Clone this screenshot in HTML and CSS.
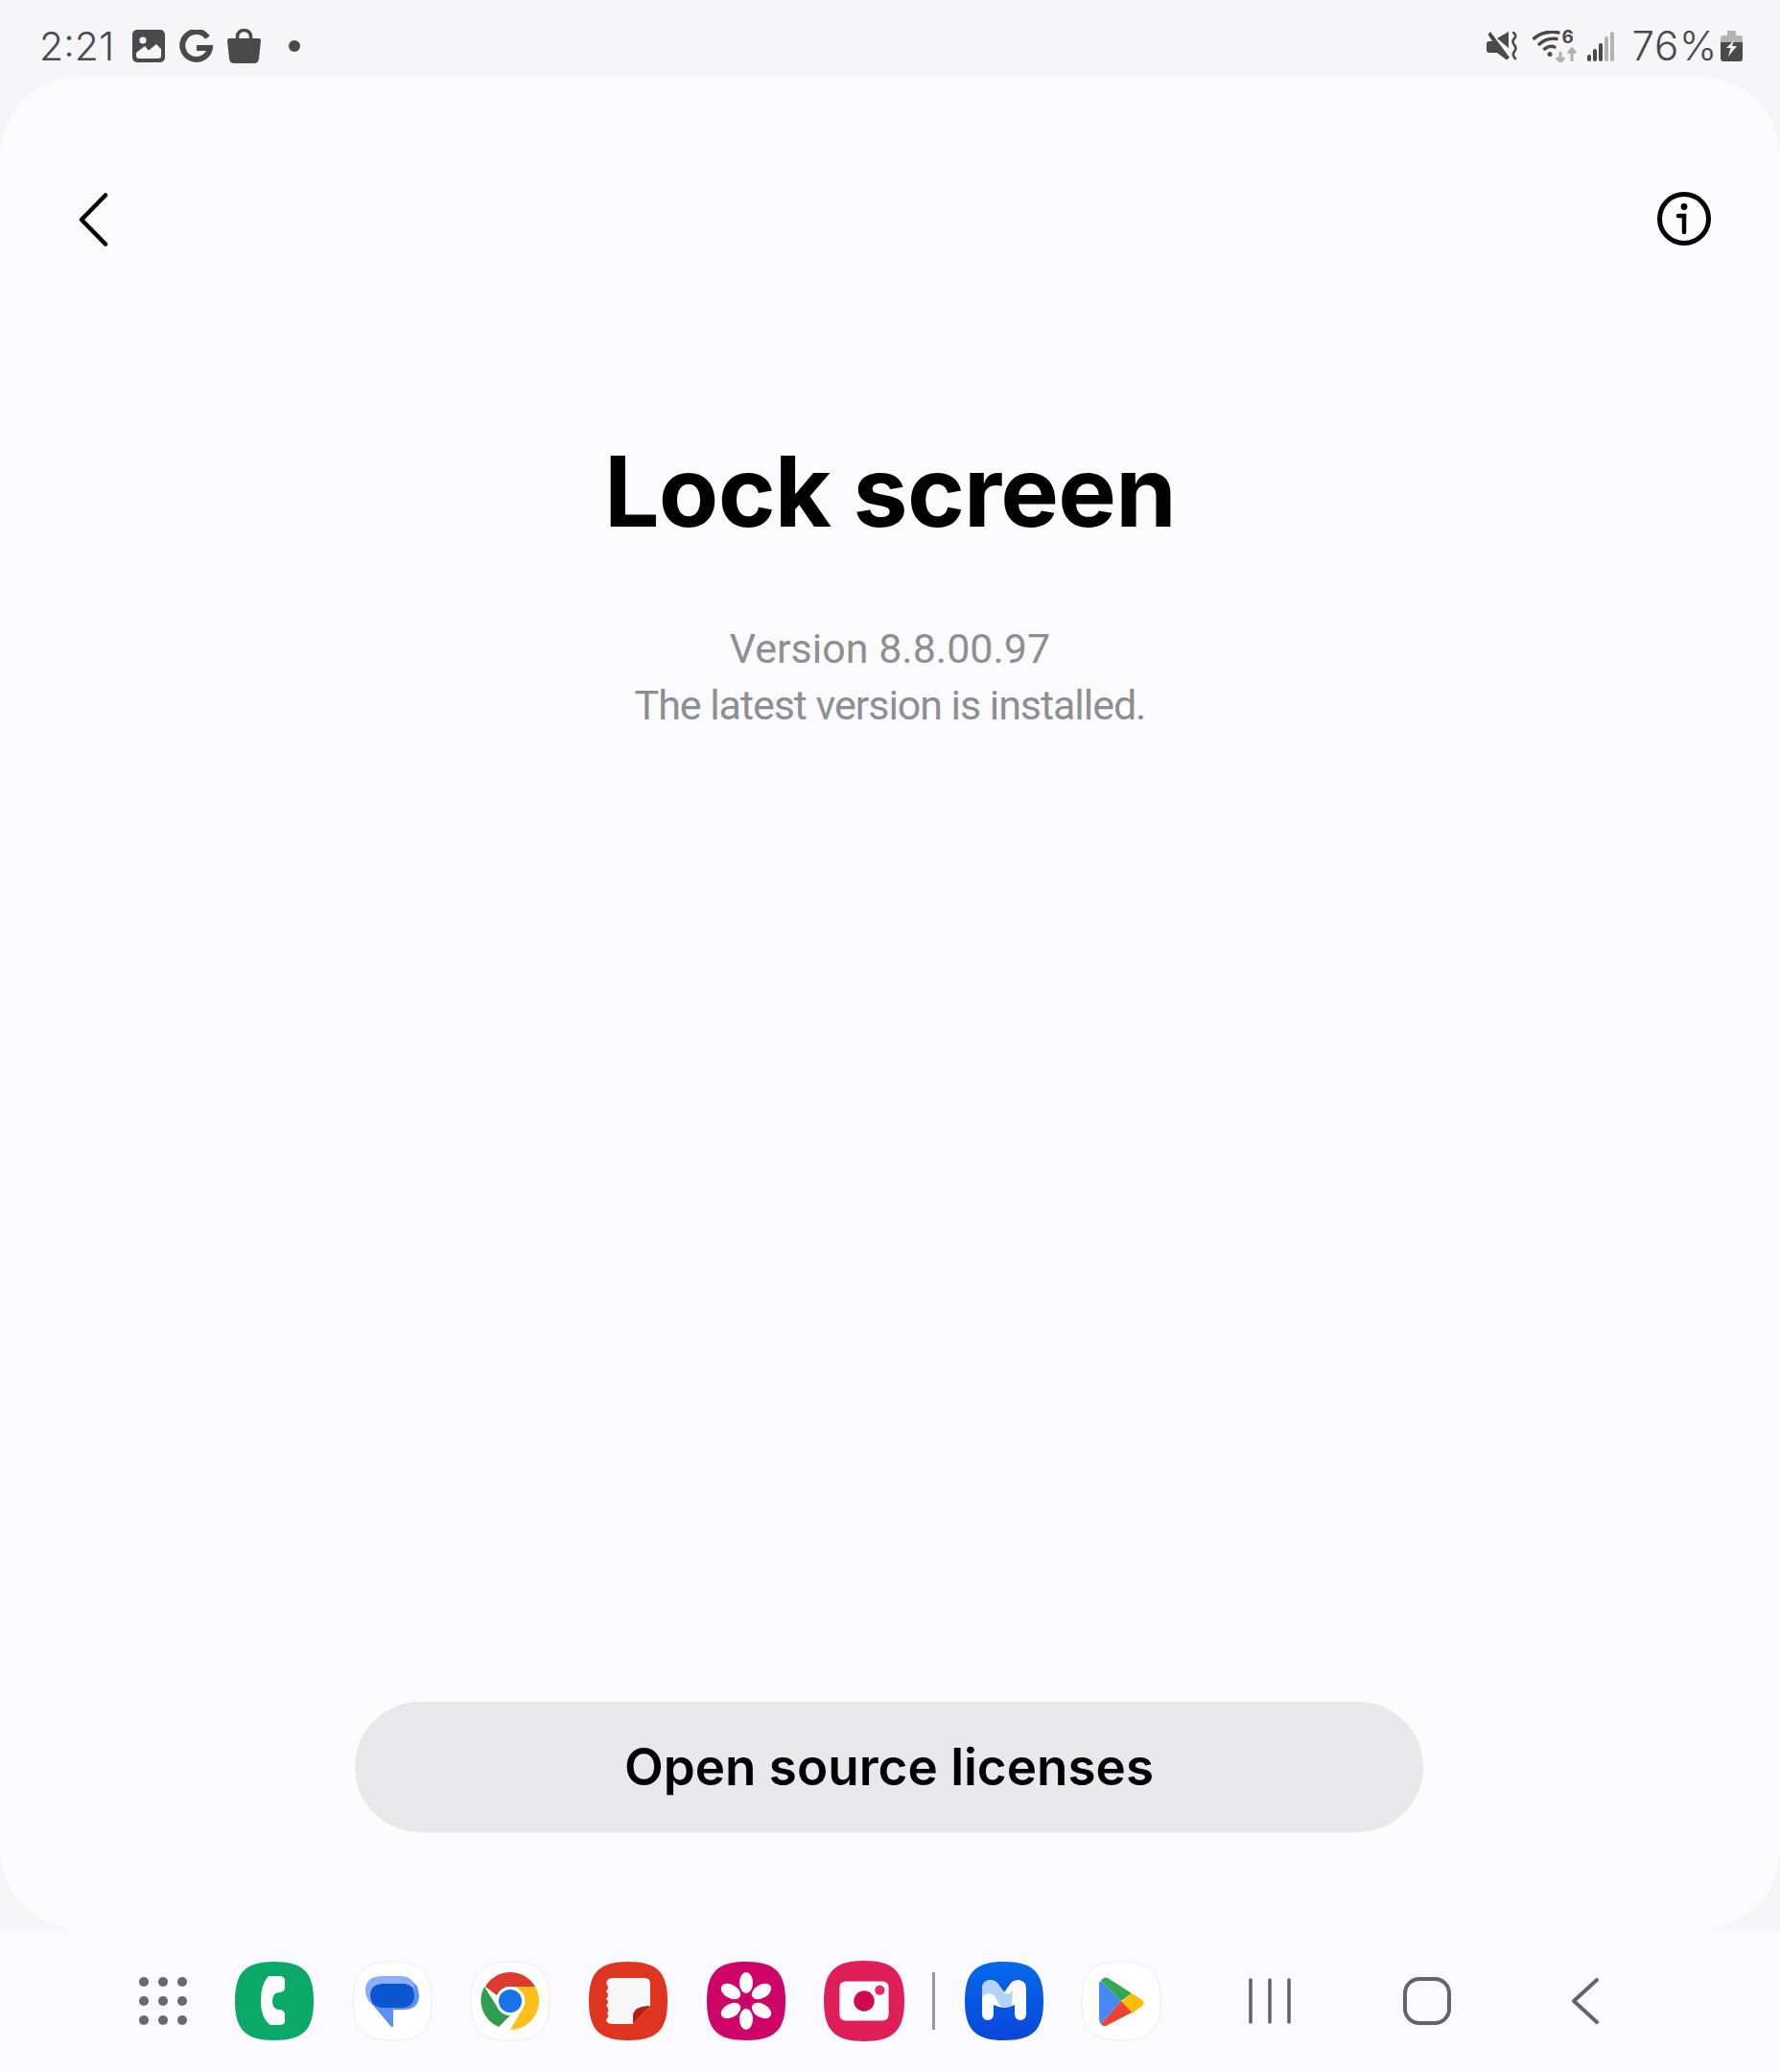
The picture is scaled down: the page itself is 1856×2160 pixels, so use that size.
FILE: index.html
```html
<!DOCTYPE html>
<html lang="en">
<head>
  <meta charset="UTF-8">
  <meta name="viewport" content="width=device-width, initial-scale=1.0">
  <title>Lock screen</title>
  <link rel="stylesheet" href="styles.css">
</head>
<body>
  <header class="status-bar">
    <div class="status-left">
      <span class="status-time">2:21</span>
      <svg class="st-gallery" width="34" height="34" viewBox="0 0 34 34">
        <rect width="34" height="34" rx="5" fill="#4a4a4a"/>
        <path d="M4 27 V24 L13 17 L17 21.500 L25 15 L30 20 V27 Q30 30 27 30 H7 Q4 30 4 27 Z" fill="#f6f6f8"/>
        <circle cx="11" cy="11" r="3.600" fill="#f6f6f8"/>
      </svg>
      <svg class="st-g" width="35" height="35" viewBox="0 0 35 35">
        <path d="M29.500 8 A14.500 14.500 0 1 0 32 19 H18" fill="none" stroke="#4a4a4a" stroke-width="6"/>
      </svg>
      <svg class="st-bag" width="35" height="36" viewBox="0 0 35 36">
        <path d="M0 12 Q0 10 2 10 H33 Q35 10 35 12 L33 31 Q32.500 36 28 36 H7 Q2.500 36 2 31 Z" fill="#4a4a4a"/>
        <path d="M10.500 12 V8 A7 6.500 0 0 1 24.500 8 V12" fill="none" stroke="#4a4a4a" stroke-width="3.500"/>
      </svg>
      <span class="status-dot"></span>
    </div>
    <div class="status-right">
      <svg class="st-mute" width="32" height="30" viewBox="0 0 32 30">
        <path d="M4 0 L24 27 L21 29.500 L15 25 L11 22 H3 Q0 22 0 19 V13 Q0 10 3 10 H6 L1.500 3 Z" fill="#4a4a4a"/>
        <path d="M11 7 L23 0 V17 Z" fill="#4a4a4a"/>
        <path d="M28 1 Q32 4 29 7 Q26 10 29 14 Q32 17 29 21 Q26 24 30 28" fill="none" stroke="#4a4a4a" stroke-width="2.500" stroke-linecap="round"/>
      </svg>
      <div class="st-wifi">
        <svg width="46" height="33" viewBox="0 0 46 33">
          <path d="M1.500 8 Q13 -1 27 2" fill="none" stroke="#4a4a4a" stroke-width="3.500" stroke-linecap="round"/>
          <path d="M7 14 Q15 7 25 8.500" fill="none" stroke="#4a4a4a" stroke-width="3.500" stroke-linecap="round"/>
          <path d="M12.500 19 Q18 15 23 17" fill="none" stroke="#4a4a4a" stroke-width="3.500" stroke-linecap="round"/>
          <circle cx="18" cy="24.500" r="2.500" fill="#4a4a4a"/>
          <path d="M29 22 V32 M25 28 L29 32.500 L33 28" fill="none" stroke="#b0b0b0" stroke-width="3"/>
          <path d="M41 32 V19 M37 23.500 L41 19 L45 23.500" fill="none" stroke="#b0b0b0" stroke-width="3"/>
        </svg>
        <span class="wifi-six">6</span>
      </div>
      <svg class="st-signal" width="28" height="31" viewBox="0 0 28 31">
        <rect x="0" y="24" width="4" height="7" rx="2" fill="#4a4a4a"/>
        <rect x="6" y="18" width="4" height="13" rx="2" fill="#4a4a4a"/>
        <rect x="12" y="12" width="4" height="19" rx="2" fill="#4a4a4a"/>
        <rect x="18" y="5" width="4" height="26" rx="2" fill="#b4b4b4"/>
        <rect x="24" y="0" width="4" height="31" rx="2" fill="#b4b4b4"/>
      </svg>
      <span class="status-batt">76%</span>
      <svg class="st-batt" width="23" height="32" viewBox="0 0 23 32">
        <path d="M7 0 H16 V5 H20 Q23 5 23 8 V12 H0 V8 Q0 5 3 5 H7 Z" fill="#b4b4b4"/>
        <path d="M0 12 H23 V29 Q23 32 20 32 H3 Q0 32 0 29 Z" fill="#4a4a4a"/>
        <path d="M14 10 L6 18 H10.500 L8 27 L17 16 H12 Z" fill="#f6f6f8"/>
      </svg>
    </div>
  </header>

  <main class="card">
    <div class="top-row">
      <svg width="36" height="60" viewBox="0 0 36 60">
        <path d="M30 5.500 L5 31 L30 56.500" fill="none" stroke="#000" stroke-width="4.500" stroke-linecap="round" stroke-linejoin="round"/>
      </svg>
      <svg width="60" height="60" viewBox="0 0 60 60">
        <circle cx="30" cy="30" r="25.500" fill="none" stroke="#000" stroke-width="5"/>
        <circle cx="30" cy="17.500" r="3.400" fill="#000"/>
        <path d="M24 27 H30 V44" fill="none" stroke="#000" stroke-width="4.500" stroke-linecap="round"/>
      </svg>
    </div>
    <div class="about">
      <h1 class="app-name">Lock screen</h1>
      <p class="version">Version 8.8.00.97</p>
      <p class="version version-note">The latest version is installed.</p>
    </div>
    <button type="button" class="license-btn">Open source licenses</button>
  </main>

  <footer class="taskbar">
    <div class="dock">
      <div class="app-grid">
        <i></i><i></i><i></i><i></i><i></i><i></i><i></i><i></i><i></i>
      </div>
      <svg class="app" viewBox="0 0 84 84">
        <path d="M42 1 C72 1 83 12 83 42 C83 72 72 83 42 83 C12 83 1 72 1 42 C1 12 12 1 42 1 Z" fill="#0aa968"/>
        <path d="M36 16 H47 Q53 16 53 21 V28 Q53 32 48 33 Q40 33 40 42 Q40 51 48 51 Q53 52 53 56 V63 Q53 67 47 67 H38 Q28 60 28 42 Q28 24 36 16 Z" fill="#fff"/>
      </svg>
      <svg class="app" viewBox="0 0 84 84">
        <path d="M42 1 C72 1 83 12 83 42 C83 72 72 83 42 83 C12 83 1 72 1 42 C1 12 12 1 42 1 Z" fill="#fff" stroke="#ececf0"/>
        <path d="M20 44 L41 69 Q43 70 43 67 V51 H55 Q70 50 70 36 Q70 24 58 18 H30 Z" fill="#5b8ffb"/>
        <path d="M30 16 H52 Q62 16 65 26 V40 L22 47 Q14 40 14 31 Q14 17 30 16 Z" fill="#8badfb"/>
        <path d="M31 24 H55 Q65 25 65 36 Q65 48 53 49 H30 Q19 47 19 36 Q19 25 31 24 Z" fill="#0b57d0"/>
      </svg>
      <svg class="app" viewBox="0 0 84 84">
        <path d="M42 1 C72 1 83 12 83 42 C83 72 72 83 42 83 C12 83 1 72 1 42 C1 12 12 1 42 1 Z" fill="#fff" stroke="#ececf0"/>
        <path d="M42 12 A30 30 0 0 1 68 27 H42 A15 15 0 0 0 28 36 L16 27 A30 30 0 0 1 42 12 Z" fill="#db3a2c"/>
        <path d="M15 27 L29 49 A15 15 0 0 0 42 57 L30 69 A30 30 0 0 1 15 27 Z" fill="#2f9e50"/>
        <path d="M68 27 A30 30 0 0 1 42 72 L55 50 A15 15 0 0 0 55 34 L48 27 Z" fill="#fdc01a"/>
        <circle cx="42" cy="42" r="15" fill="#fff"/>
        <circle cx="42" cy="42" r="12" fill="#1b73e8"/>
      </svg>
      <svg class="app" viewBox="0 0 84 84">
        <path d="M42 1 C72 1 83 12 83 42 C83 72 72 83 42 83 C12 83 1 72 1 42 C1 12 12 1 42 1 Z" fill="#df3420"/>
        <path d="M25 18 H59 Q65 18 65 24 V47 L47 66 H26 Q19 66 19 61 Q23 58 20 55 Q23 50 19 47 Q23 42 19 40 Q23 35 19 32 Q23 27 19 24 Q20 18 25 18 Z" fill="#f9f8f8"/>
        <path d="M47 66 V57 Q48 47 65 47 Z" fill="#b01f1c"/>
      </svg>
      <svg class="app" viewBox="0 0 84 84">
        <path d="M42 1 C72 1 83 12 83 42 C83 72 72 83 42 83 C12 83 1 72 1 42 C1 12 12 1 42 1 Z" fill="#cf0468"/>
        <g fill="#fff">
          <ellipse cx="42" cy="23" rx="7" ry="11"/>
          <ellipse cx="42" cy="61" rx="7" ry="11"/>
          <ellipse cx="26" cy="32" rx="7" ry="11" transform="rotate(-60 26 32)"/>
          <ellipse cx="58" cy="32" rx="7" ry="11" transform="rotate(60 58 32)"/>
          <ellipse cx="26" cy="52" rx="7" ry="11" transform="rotate(60 26 52)"/>
          <ellipse cx="58" cy="52" rx="7" ry="11" transform="rotate(-60 58 52)"/>
        </g>
        <circle cx="42" cy="42" r="5.500" fill="#c40560"/>
      </svg>
      <svg class="app app-camera" viewBox="0 0 84 84">
        <path d="M42 1 C72 1 83 12 83 42 C83 72 72 83 42 83 C12 83 1 72 1 42 C1 12 12 1 42 1 Z" fill="#e01f58"/>
        <rect x="17" y="22" width="50" height="40" rx="6" fill="#fff"/>
        <circle cx="42" cy="42" r="10.500" fill="#d0094f"/>
        <circle cx="58" cy="31" r="5" fill="#e82a5e"/>
      </svg>
      <span class="dock-sep"></span>
      <svg class="app app-m" viewBox="0 0 84 84">
        <defs>
          <linearGradient id="mblue" x1="0" y1="0" x2="0" y2="1">
            <stop offset="0" stop-color="#0469ec"/>
            <stop offset="1" stop-color="#0b46dc"/>
          </linearGradient>
        </defs>
        <path d="M42 1 C72 1 83 12 83 42 C83 72 72 83 42 83 C12 83 1 72 1 42 C1 12 12 1 42 1 Z" fill="url(#mblue)"/>
        <path d="M19 29 V55 Q19 62 25 62 Q31 62 31 55 V46 Q37 49 42 49 Q47 49 53 46 V55 Q53 62 59 62 Q65 62 65 55 V29 Q65 21 57 20 Q50 20 47 26 L42 33 L37 26 Q34 20 27 20 Q19 21 19 29 Z" fill="#fff"/>
        <path d="M19 29 Q19 21 27 20 Q34 20 37 26 L43 34 Q47 36 51 31 L50 47 Q46 49 42 49 Q37 48 33 38 Q27 31 19 37 Z" fill="#b5d3f8"/>
      </svg>
      <svg class="app" viewBox="0 0 84 84">
        <path d="M42 1 C72 1 83 12 83 42 C83 72 72 83 42 83 C12 83 1 72 1 42 C1 12 12 1 42 1 Z" fill="#fff" stroke="#ececf0"/>
        <path d="M21 21 L42 42 L21 66 Q19 64 19 60 V24 Q19 22 21 21 Z" fill="#4688f5"/>
        <path d="M21 21 Q24 16 28 18 L53 34 L42 42 Z" fill="#33a852"/>
        <path d="M53 34 L64 41 Q67 45 64 47 L53 55 L42 43 Z" fill="#fdbd05"/>
        <path d="M21 66 Q24 70 28 67 L53 54 L42 42 Z" fill="#ea4336"/>
      </svg>
    </div>
    <div class="nav-keys">
      <svg width="46" height="48" viewBox="0 0 46 48">
        <path d="M3 2 V46 M23 2 V46 M43 2 V46" fill="none" stroke="#646464" stroke-width="3.500" stroke-linecap="round"/>
      </svg>
      <svg width="50" height="50" viewBox="0 0 50 50">
        <rect x="2" y="2" width="46" height="46" rx="15" fill="none" stroke="#646464" stroke-width="4"/>
      </svg>
      <svg class="nav-back" width="30" height="50" viewBox="0 0 30 50">
        <path d="M27 3 L3 25 L27 47" fill="none" stroke="#646464" stroke-width="4" stroke-linecap="round" stroke-linejoin="round"/>
      </svg>
    </div>
  </footer>
</body>
</html>
```

FILE: styles.css
```css
html, body {
  margin: 0;
  padding: 0;
  background-color: #f6f6f8;
}

body {
  width: 1856px;
  height: 2160px;
  display: flex;
  flex-direction: column;
  font-family: Inter, "Liberation Sans", sans-serif;
  color: #000;
  overflow: hidden;
}

.status-bar {
  box-sizing: border-box;
  height: 80px;
  display: flex;
  justify-content: space-between;
  align-items: center;
  padding: 16px 39px 0 41px;
  color: #4a4a4a;
}

.status-left,
.status-right {
  display: flex;
  align-items: center;
}

.status-time,
.status-batt {
  font-size: 41px;
  font-weight: 300;
  line-height: 48px;
}

.status-batt {
  margin: 0 3px 0 18px;
  font-size: 42px;
  letter-spacing: 0.7px;
}

.st-gallery {
  margin-left: 19px;
}

.st-g,
.st-bag {
  margin-left: 15px;
}

.status-dot {
  width: 12px;
  height: 12px;
  margin-left: 29px;
  border-radius: 50%;
  background-color: #4a4a4a;
}

.st-wifi {
  position: relative;
  display: flex;
  margin: 0 11px 0 16px;
}

.wifi-six {
  position: absolute;
  top: -3px;
  left: 30px;
  font-size: 19px;
  font-weight: 700;
  line-height: 20px;
  color: #4a4a4a;
}

.card {
  flex: 0 0 1931px;
  display: flex;
  flex-direction: column;
  align-items: center;
  border-radius: 84px;
  background-color: #fcfcfe;
}

.top-row {
  align-self: stretch;
  display: flex;
  justify-content: space-between;
  align-items: center;
  height: 60px;
  margin-top: 118px;
  padding: 0 70px 0 80px;
}

.about {
  flex: 1;
  text-align: center;
}

.app-name {
  margin: 0 0 75px;
  padding-top: 194px;
  font-size: 102px;
  font-weight: 700;
  line-height: 120px;
  letter-spacing: -0.8px;
}

.version {
  margin: 0;
  font-family: Roboto, Inter, sans-serif;
  font-size: 43px;
  font-weight: 400;
  line-height: 59px;
  color: #8e8e93;
}

.version-note {
  letter-spacing: -1.05px;
}

.license-btn {
  width: 1114px;
  height: 136px;
  margin: 0 2px 101px 0;
  border: none;
  border-radius: 68px;
  background-color: #e9e9eb;
  color: #000;
  font-family: Inter, "Liberation Sans", sans-serif;
  font-size: 53px;
  font-weight: 600;
}

.taskbar {
  flex: 1;
  display: flex;
  align-items: center;
  padding-left: 145px;
  background-color: #fbfbff;
}

.dock {
  display: flex;
  align-items: center;
}

.app-grid {
  display: grid;
  grid-template-columns: repeat(3, 10px);
  gap: 10px;
  margin-right: 49px;
}

.app-grid i {
  width: 10px;
  height: 10px;
  border-radius: 50%;
  background-color: #6a6a6a;
}

.app {
  width: 84px;
  height: 84px;
  margin-right: 39px;
}

.app-camera {
  width: 86px;
  height: 86px;
  margin: 0 28px 0 -1px;
}

.app-m {
  margin-right: 38px;
}

.dock-sep {
  width: 3px;
  height: 60px;
  margin-right: 30px;
  background-color: #999;
}

.nav-keys {
  display: flex;
  align-items: center;
  gap: 116px;
  margin-left: 51px;
}

.nav-back {
  margin-left: 9px;
}
```
